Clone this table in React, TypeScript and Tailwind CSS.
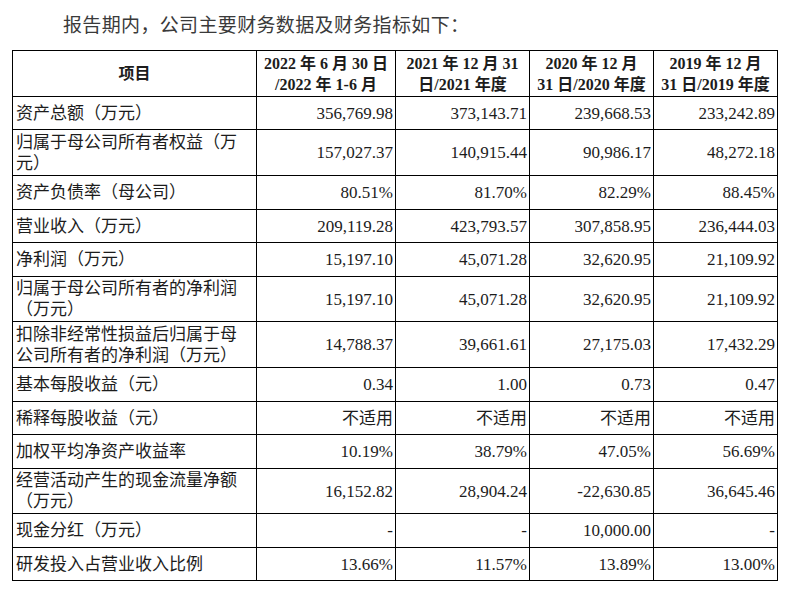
const headers: string[][] = [
  ["2022 年 6 月 30 日", "/2022 年 1-6 月"],
  ["2021 年 12 月 31", "日/2021 年度"],
  ["2020 年 12 月", "31 日/2020 年度"],
  ["2019 年 12 月", "31 日/2019 年度"],
]

type Row = { label: string[]; values: string[]; h: string }

const rows: Row[] = [
  { label: ["资产总额（万元）"], values: ["356,769.98", "373,143.71", "239,668.53", "233,242.89"], h: "h-[33px]" },
  { label: ["归属于母公司所有者权益（万", "元）"], values: ["157,027.37", "140,915.44", "90,986.17", "48,272.18"], h: "h-[46px]" },
  { label: ["资产负债率（母公司）"], values: ["80.51%", "81.70%", "82.29%", "88.45%"], h: "h-[34px]" },
  { label: ["营业收入（万元）"], values: ["209,119.28", "423,793.57", "307,858.95", "236,444.03"], h: "h-[33px]" },
  { label: ["净利润（万元）"], values: ["15,197.10", "45,071.28", "32,620.95", "21,109.92"], h: "h-[34px]" },
  { label: ["归属于母公司所有者的净利润", "（万元）"], values: ["15,197.10", "45,071.28", "32,620.95", "21,109.92"], h: "h-[45px]" },
  { label: ["扣除非经常性损益后归属于母", "公司所有者的净利润（万元）"], values: ["14,788.37", "39,661.61", "27,175.03", "17,432.29"], h: "h-[46px]" },
  { label: ["基本每股收益（元）"], values: ["0.34", "1.00", "0.73", "0.47"], h: "h-[34px]" },
  { label: ["稀释每股收益（元）"], values: ["不适用", "不适用", "不适用", "不适用"], h: "h-[33px]" },
  { label: ["加权平均净资产收益率"], values: ["10.19%", "38.79%", "47.05%", "56.69%"], h: "h-[34px]" },
  { label: ["经营活动产生的现金流量净额", "（万元）"], values: ["16,152.82", "28,904.24", "-22,630.85", "36,645.46"], h: "h-[45px]" },
  { label: ["现金分红（万元）"], values: ["-", "-", "10,000.00", "-"], h: "h-[34px]" },
  { label: ["研发投入占营业收入比例"], values: ["13.66%", "11.57%", "13.89%", "13.00%"], h: "h-[33px]" },
]

export default function App() {
  return (
    <div className="w-[789px] h-[605px] bg-white font-['Liberation_Serif','Noto_Sans_CJK_SC',serif] text-[#1c1c1c]">
      <p className="h-[50px] pl-[63px] pt-[14px] text-[19px] leading-[24px] tracking-[0.35px] text-[#3a3a3a]">
        报告期内，公司主要财务数据及财务指标如下：
      </p>

      <table className="ml-[12px] border-collapse table-fixed w-[765px]">
        <colgroup>
          <col className="w-[244px]" />
          <col className="w-[139px]" />
          <col className="w-[134px]" />
          <col className="w-[124px]" />
          <col className="w-[124px]" />
        </colgroup>
        <thead>
          <tr className="h-[46px]">
            <th className="border border-black text-[16px] font-bold">项目</th>
            {headers.map((h) => (
              <th key={h[0]} className="border border-black px-0 text-center text-[16px] font-bold leading-[21px] whitespace-nowrap">
                {h[0]}
                <br />
                {h[1]}
              </th>
            ))}
          </tr>
        </thead>
        <tbody>
          {rows.map((r) => (
            <tr key={r.label.join("")} className={r.h}>
              <td className="border border-black pl-[3px] text-[17px] leading-[21px] whitespace-nowrap">
                {r.label.map((l, i) => (
                  <div key={i}>{l}</div>
                ))}
              </td>
              {r.values.map((v, i) => (
                <td key={i} className="border border-black pr-[2px] text-right text-[17px] leading-[21px] whitespace-nowrap">
                  {v}
                </td>
              ))}
            </tr>
          ))}
        </tbody>
      </table>
    </div>
  )
}
